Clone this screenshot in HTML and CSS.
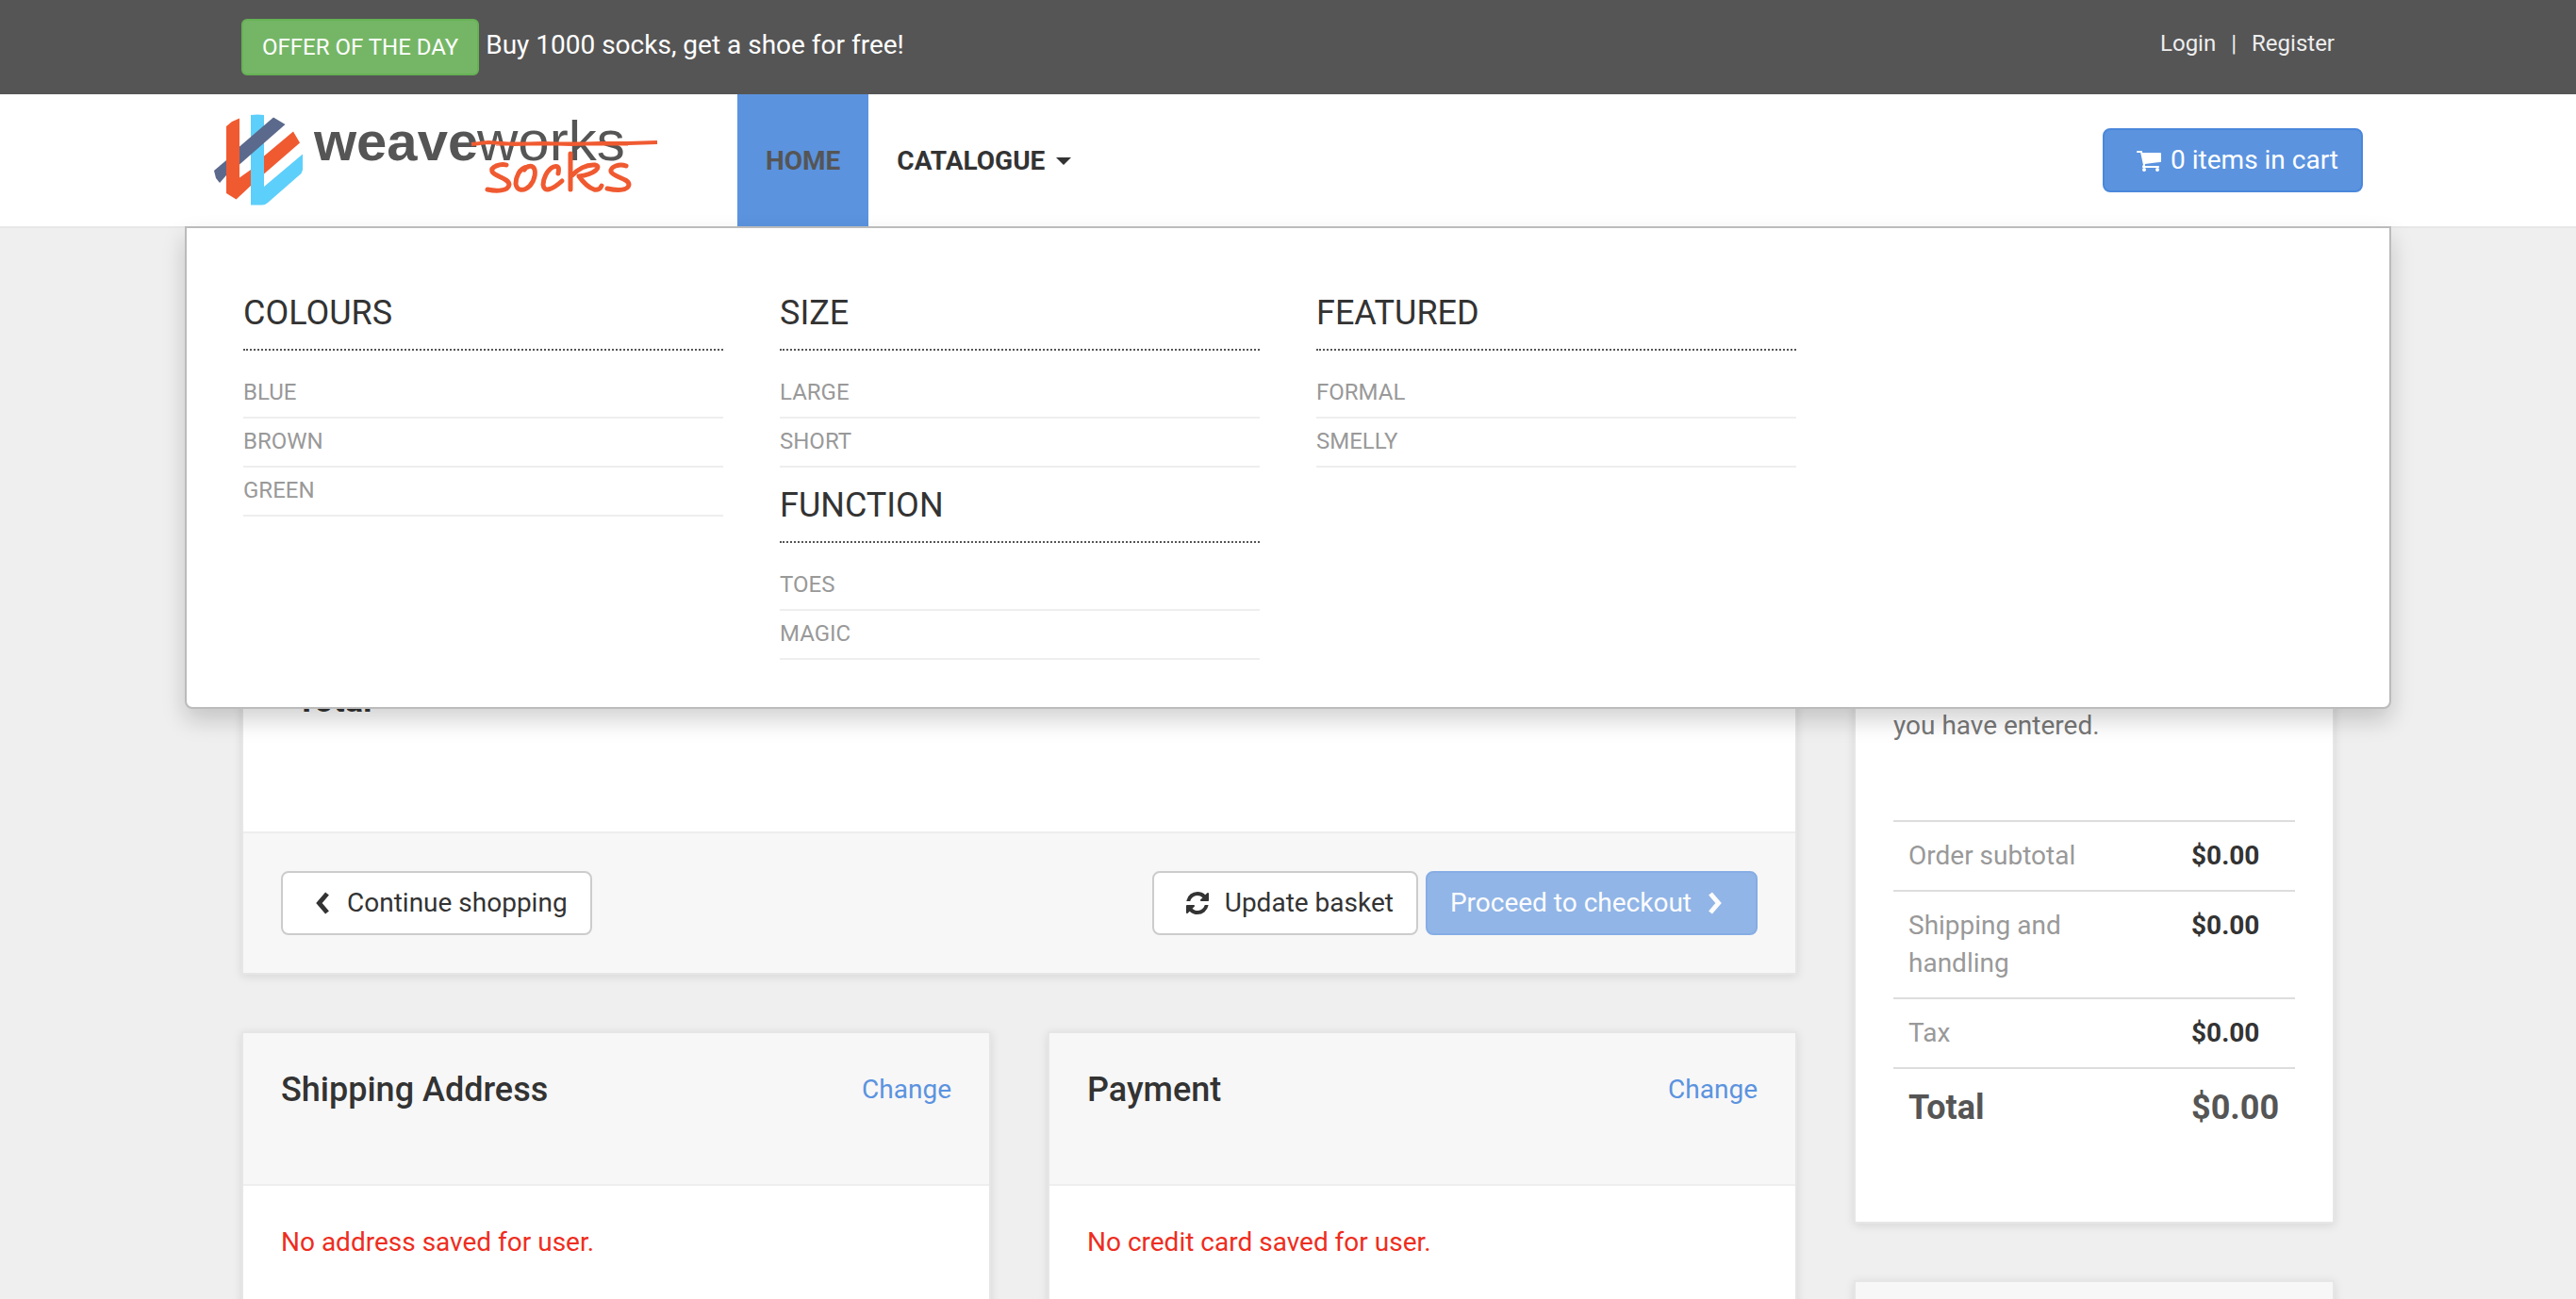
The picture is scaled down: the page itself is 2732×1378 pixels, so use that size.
FILE: index.html
```html
<!DOCTYPE html>
<html lang="en">
<head>
<meta charset="utf-8">
<title>Weaveworks Socks - Basket</title>
<link rel="stylesheet" href="styles.css">
</head>
<body>
<div class="topbar">
  <div class="container topbar-inner">
    <div class="offer">
      <a href="#" class="btn btn-success">OFFER OF THE DAY</a>
      <a href="#" class="offer-text">Buy 1000 socks, get a shoe for free!</a>
    </div>
    <nav class="account">
      <a href="#">Login</a><span>|</span><a href="#">Register</a>
    </nav>
  </div>
</div>

<header class="navbar">
  <div class="nav-inner">
    <a href="#" class="brand" aria-label="Weaveworks socks">
      <svg width="474" height="120" viewBox="0 -10 474 120">
        <g transform="translate(-226 -120)">
          <path fill="#5b698c" d="M227 181L240 170V186L233 194L229 189Z"/>
          <path fill="#f05a31" d="M240 134L246 129L254 125.500V188.500L266 180V197L250.500 211.500L240 205Z"/>
          <path fill="#5dcffb" d="M266 122Q273 121 280 122V198L321 163.500V180L319.500 184L284 215Q281 217.500 278 217.500H266Z"/>
          <path fill="#5b698c" d="M254 155.500L290 124.500L302.500 132L254 174.500Z"/>
          <path fill="#f05a31" d="M280 165.500L311 139.500L318 151.500L280 184.500Z"/>
        </g>
        <text x="107" y="50" class="logo-weave">weave</text>
        <text x="280" y="50" class="logo-works">works</text>
        <path class="logo-strike" d="M274 33L292 31L320 33L350 32L380 33L410 32L440 32L471 31M300 32.500H440"/>
        <g class="logo-socks">
          <path d="M311 55C305 53 294 57 296 62C298 67 314 69 314 76C313 83 300 83 291 81"/>
          <path d="M334 57C324 58 321 69 321 75C322 82 329 84 336 77C342 70 343 60 339 57C336 55 332 57 330 60"/>
          <path d="M366 64C367 59 367 55 361 57C354 60 350 70 350 76C351 84 359 82 370 72"/>
          <path d="M379 43L379 81M381 66C386 60 396 54 405 55C413 57 404 65 388 67C393 74 398 79 404 81C408 82 411 80 412 77"/>
          <path d="M438 56C431 53 421 57 422 62C424 68 441 69 441 76C440 83 427 82 418 80"/>
        </g>
      </svg>
    </a>
    <nav class="menu">
      <a href="#" class="menu-item active">HOME</a>
      <a href="#" class="menu-item">CATALOGUE <i class="caret"></i></a>
    </nav>
    <a href="#" class="btn btn-primary cart">
      <svg class="cart-icon" width="26" height="24" viewBox="0 0 1664 1536" fill="currentColor"><path d="M640 1408a128 128 0 1 1-256 0 128 128 0 0 1 256 0zm896 0a128 128 0 1 1-256 0 128 128 0 0 1 256 0zM1664 320v512q0 24-16.500 42.500T1607 896L563 1018q13 60 13 70 0 16-24 64h920q26 0 45 19t19 45-19 45-45 19H448q-26 0-45-19t-19-45q0-11 8-31.500t16-36 21.500-40T445 1079L268 256H64q-26 0-45-19T0 192t19-45 45-19h256q16 0 28.500 6.500T368 150t13 24.500 8 26 5.500 29.500 4.500 26h1201q26 0 45 19t19 45z"/></svg>
      0 items in cart
    </a>
  </div>

  <div class="mega">
    <section class="mega-col">
      <h5>COLOURS</h5>
      <ul><li><a href="#">BLUE</a></li><li><a href="#">BROWN</a></li><li><a href="#">GREEN</a></li></ul>
    </section>
    <section class="mega-col">
      <h5>SIZE</h5>
      <ul><li><a href="#">LARGE</a></li><li><a href="#">SHORT</a></li></ul>
      <h5>FUNCTION</h5>
      <ul><li><a href="#">TOES</a></li><li><a href="#">MAGIC</a></li></ul>
    </section>
    <section class="mega-col">
      <h5>FEATURED</h5>
      <ul><li><a href="#">FORMAL</a></li><li><a href="#">SMELLY</a></li></ul>
    </section>
  </div>
</header>

<main class="container content">
  <div class="primary">
    <section class="card">
      <div class="basket-body">
        <table class="basket"><tbody><tr><th scope="row">Total</th></tr></tbody></table>
      </div>
      <div class="card-foot">
        <a href="#" class="btn btn-default">
          <svg class="icon" width="16" height="26" viewBox="0 0 16 26"><path d="M13 3L4.500 13L13 23"/></svg>
          Continue shopping
        </a>
        <div class="actions">
          <button type="button" class="btn btn-default">
            <svg class="icon icon-fill" width="24" height="24" viewBox="0 0 1536 1536"><path d="M1511 928q0 5-1 7-64 268-268 434.500T764 1536q-146 0-282.500-55T238 1324l-129 129q-19 19-45 19t-45-19-19-45V960q0-26 19-45t45-19h448q26 0 45 19t19 45-19 45l-137 137q71 66 161 102t187 36q134 0 250-65t186-179q11-17 53-117 8-23 30-23h192q13 0 22.500 9.500t9.500 22.500zm25-800v448q0 26-19 45t-45 19h-448q-26 0-45-19t-19-45 19-45l138-138Q969 256 768 256q-134 0-250 65T332 500q-11 17-53 117-8 23-30 23H50q-13 0-22.500-9.500T18 608v-7q65-268 270-434.500T768 0q146 0 284 55.500T1297 212l130-129q19-19 45-19t45 19 19 45z"/></svg>
            Update basket
          </button>
          <button type="button" class="btn btn-primary" disabled>
            Proceed to checkout
            <svg class="icon" width="18" height="26" viewBox="0 0 18 26"><path d="M4 3L12.500 13L4 23"/></svg>
          </button>
        </div>
      </div>
    </section>

    <div class="pair">
      <section class="card">
        <div class="card-head"><h3>Shipping Address</h3><a href="#">Change</a></div>
        <p class="card-body error">No address saved for user.</p>
      </section>
      <section class="card">
        <div class="card-head"><h3>Payment</h3><a href="#">Change</a></div>
        <p class="card-body error">No credit card saved for user.</p>
      </section>
    </div>
  </div>

  <aside class="side">
    <section class="card summary">
      <div class="card-head"><h3>Order summary</h3></div>
      <p class="note">Shipping and additional costs are calculated based on the values you have entered.</p>
      <table class="totals">
        <tbody>
          <tr><td>Order subtotal</td><th>$0.00</th></tr>
          <tr><td>Shipping and handling</td><th>$0.00</th></tr>
          <tr><td>Tax</td><th>$0.00</th></tr>
          <tr class="grand"><td>Total</td><th>$0.00</th></tr>
        </tbody>
      </table>
    </section>
    <section class="card"><div class="card-head"></div></section>
  </aside>
</main>
</body>
</html>
```
FILE: styles.css
```css
* { box-sizing: border-box; }

body {
  margin: 0;
  background: #efefef;
  color: #555;
  font: 28px/40px Roboto, sans-serif;
}

a { color: #5b93df; text-decoration: none; }
h3, h5, p, ul { margin: 0; padding: 0; }
ul { list-style: none; }
table { border-collapse: collapse; width: 100%; }
th, td { text-align: left; vertical-align: top; padding: 16px; }

.container { max-width: 2340px; margin: 0 auto; padding: 0 60px; }

/* Buttons */
.btn {
  display: inline-flex;
  align-items: center;
  padding: 12px 24px;
  border: 2px solid #ccc;
  border-radius: 8px;
  background: #fff;
  color: #333;
  font: inherit;
  white-space: nowrap;
}
.btn-success { padding: 10px 20px; border-color: #67b255; border-radius: 6px; background: #75b666; color: #fff; font-size: 24px; line-height: 36px; }
.btn-primary { border-color: #4a87db; background: #5b93df; color: #fff; }
.btn:disabled { opacity: .65; }
.icon { margin: 0 18px 0 10px; fill: none; stroke: currentColor; stroke-width: 5; }
.btn-primary .icon { margin: 0 10px 0 16px; }
.icon-fill { margin-right: 17px; fill: currentColor; stroke: none; }

/* Top bar */
.topbar { background: #555; }
.topbar-inner { display: flex; justify-content: space-between; height: 100px; padding-top: 20px; }
.offer { display: flex; align-items: flex-start; gap: 7px; }
.offer-text { color: #fff; line-height: 56px; }
.account { display: flex; gap: 16px; font-size: 24px; line-height: 52px; }
.account, .account a { color: #eee; }

/* Navigation */
.navbar { position: relative; background: #fff; border-bottom: 2px solid #e7e7e7; }
.nav-inner { display: flex; align-items: center; max-width: 2340px; height: 140px; margin: 0 auto; padding: 0 30px; }
.brand { display: flex; width: 556px; }
.menu { display: flex; flex: 1; align-self: stretch; }
.menu-item { display: flex; align-items: center; padding: 2px 30px 0; color: #333; font-weight: 700; }
.menu-item.active { background: #5b93df; color: #555; }
.caret { margin-left: 12px; border: solid transparent; border-width: 8px 8px 0; border-top-color: #333; }
.cart-icon { margin: 0 10px; }

.logo-weave { font: 700 58px "Liberation Sans", sans-serif; fill: #555; }
.logo-works { font: 60px "Liberation Sans", sans-serif; fill: #555; }
.logo-strike { fill: none; stroke: #f05a31; stroke-width: 4; }
.logo-socks { fill: none; stroke: #f05a31; stroke-width: 5; stroke-linecap: round; stroke-linejoin: round; }

/* Catalogue drop-down, laid over the page */
.mega {
  position: absolute;
  z-index: 2;
  top: 100%;
  left: 0;
  right: 0;
  display: grid;
  grid-template-columns: repeat(4, 1fr);
  gap: 60px;
  max-width: 2340px;
  margin: 0 auto;
  padding: 50px 60px;
  border: 2px solid #bbb;
  border-radius: 0 0 8px 8px;
  background: #fff;
  box-shadow: 0 12px 24px rgba(0, 0, 0, .175);
}
.mega h5 { margin: 20px 0; padding-bottom: 18px; border-bottom: 2px dotted #555; color: #333; font-size: 36px; font-weight: 400; }
.mega ul + h5 { margin-top: 18px; padding-top: 2px; }
.mega li { padding: 7px 0 9px; border-bottom: 2px solid #eee; font-size: 24px; line-height: 34px; }
.mega li a { display: block; color: #999; }

/* Page content */
.content { display: grid; grid-template-columns: 1650fr 510fr; gap: 60px; }
.primary, .side { display: flex; flex-direction: column; gap: 60px; }
.card { border: 2px solid #e6e6e6; background: #fff; box-shadow: 0 2px 10px rgba(0, 0, 0, .1); }
.card-head { display: flex; justify-content: space-between; min-height: 162px; padding: 40px; border-bottom: 2px solid #eee; background: #f7f7f7; }
.card-head h3 { color: #333; font-size: 36px; font-weight: 500; }
.card-body { padding: 40px 40px 80px; }
.error { color: #ee2d20; }
.card-foot { display: flex; justify-content: space-between; padding: 40px; border-top: 2px solid #eee; background: #f7f7f7; }
.actions { display: flex; gap: 8px; }
.basket-body { padding: 458px 40px 98px; }
.basket th { color: #333; font-size: 36px; line-height: 50px; }
.pair { display: grid; grid-template-columns: 1fr 1fr; gap: 60px; }

.summary .note { padding: 264px 40px 80px; color: #777; }
.totals { width: auto; margin: 0 40px 80px; }
.totals tr { border-top: 2px solid #ddd; }
.totals td { color: #999; }
.totals th { width: 126px; color: #333; font-weight: 700; }
.totals .grand > * { color: #555; font-size: 36px; font-weight: 700; line-height: 50px; }
```
